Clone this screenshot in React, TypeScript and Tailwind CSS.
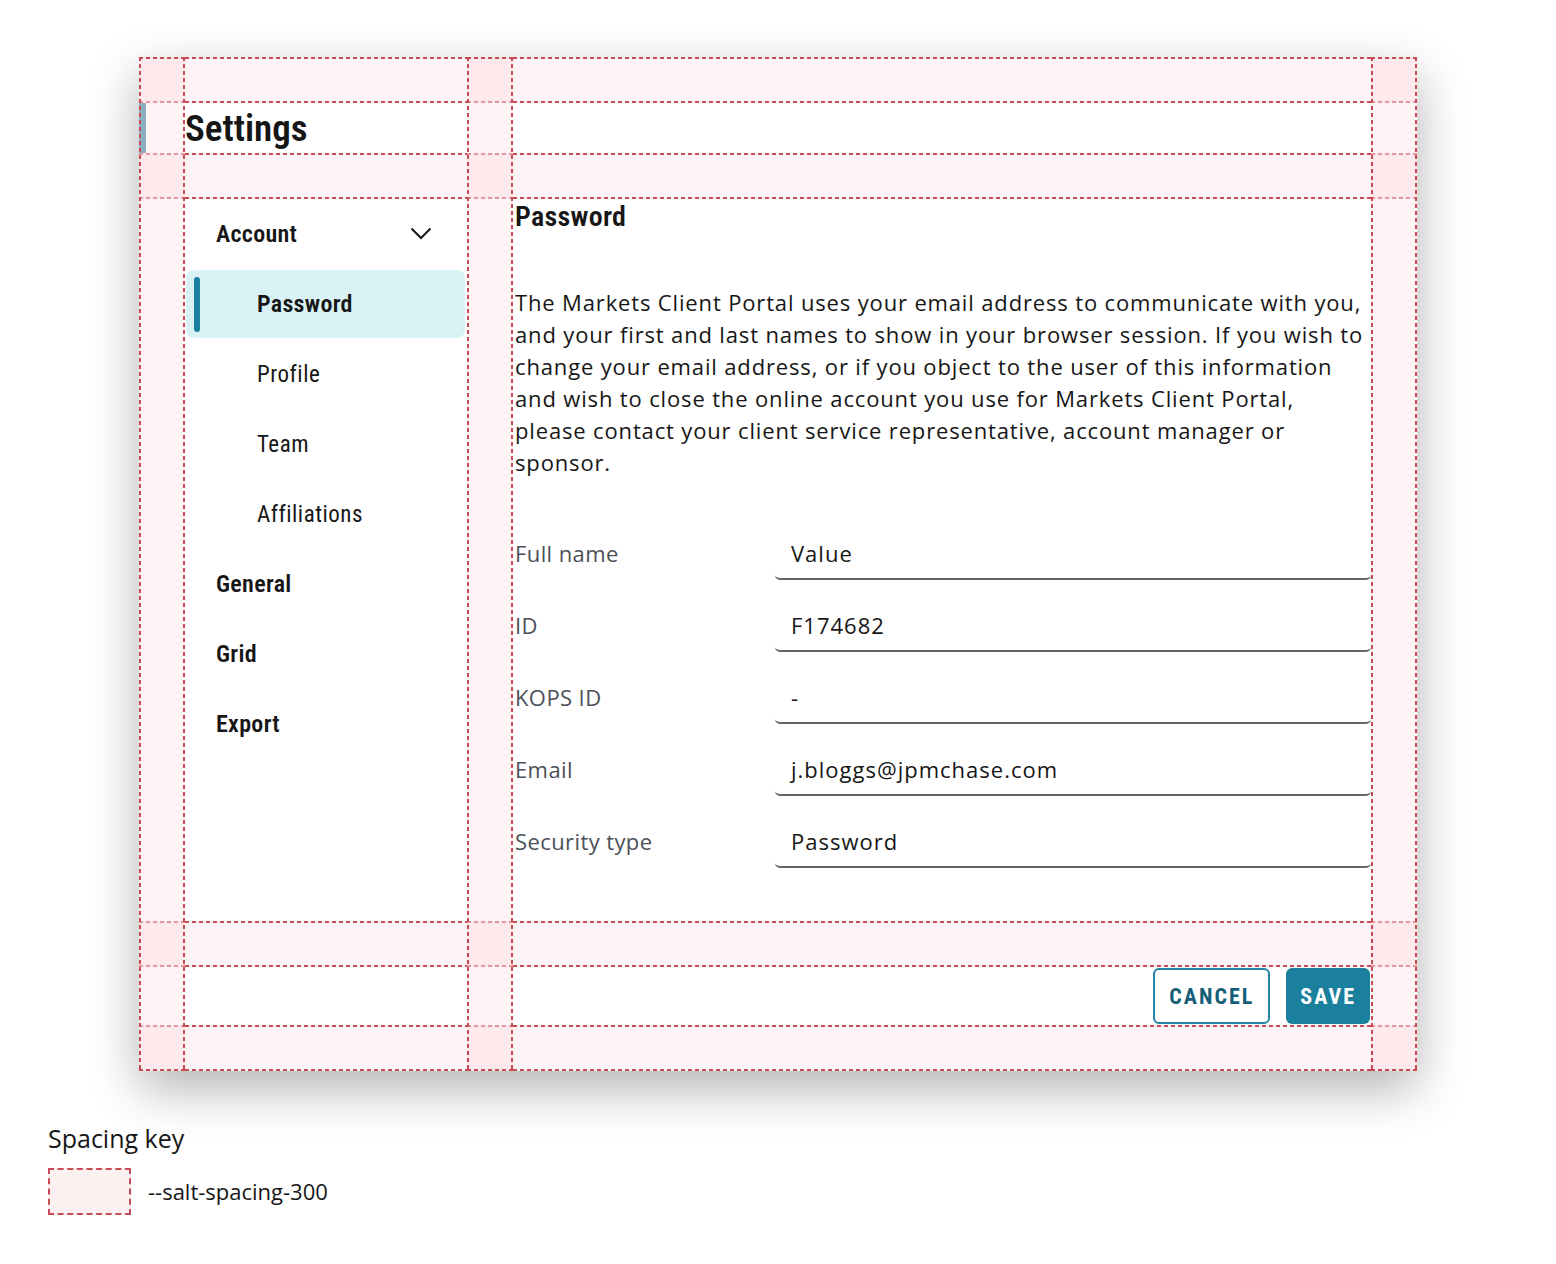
const narrow = "font-['Roboto_Condensed','DejaVu_Sans_Condensed',sans-serif]";
const openSans = "font-['Open_Sans','Liberation_Sans',sans-serif]";

const darkH = "h-[2px] bg-[repeating-linear-gradient(90deg,#c64b55_0_4px,transparent_4px_7px)]";
const lightH = "h-[2px] bg-[repeating-linear-gradient(90deg,#e29ca3_0_4px,transparent_4px_7px)]";
const darkV = "w-[2px] bg-[repeating-linear-gradient(180deg,#c64b55_0_4px,transparent_4px_7px)]";

function HLine({ outer }: { outer?: boolean }) {
  return (
    <div className="grid grid-cols-[46px_282px_46px_1fr_46px]">
      <div className={outer ? darkH : lightH} />
      <div className={darkH} />
      <div className={outer ? darkH : lightH} />
      <div className={darkH} />
      <div className={outer ? darkH : lightH} />
    </div>
  );
}

// spacing annotation drawn over the dialog
function SpacingOverlay() {
  return (
    <div className="pointer-events-none absolute inset-0 grid grid-cols-[46px_282px_46px_1fr_46px] grid-rows-[46px_50px_46px_1fr_46px_58px_46px]">
      <div className="col-span-full row-start-1 flex flex-col justify-between bg-[rgba(240,60,80,0.06)]">
        <HLine outer />
        <HLine />
      </div>
      <div className="col-span-full row-start-3 flex flex-col justify-between bg-[rgba(240,60,80,0.06)]">
        <HLine />
        <HLine />
      </div>
      <div className="col-span-full row-start-5 flex flex-col justify-between bg-[rgba(240,60,80,0.06)]">
        <HLine />
        <HLine />
      </div>
      <div className="col-span-full row-start-7 flex flex-col justify-between bg-[rgba(240,60,80,0.06)]">
        <HLine />
        <HLine outer />
      </div>
      <div className="col-start-1 row-span-full flex justify-between bg-[rgba(240,60,80,0.06)]">
        <div className={darkV} />
        <div className={darkV} />
      </div>
      <div className="col-start-3 row-span-full flex justify-between bg-[rgba(240,60,80,0.06)]">
        <div className={darkV} />
        <div className={darkV} />
      </div>
      <div className="col-start-5 row-span-full flex justify-between bg-[rgba(240,60,80,0.06)]">
        <div className={darkV} />
        <div className={darkV} />
      </div>
    </div>
  );
}

function Chevron() {
  return (
    <svg width="22" height="14" viewBox="0 0 22 14" fill="none">
      <polyline points="1.5,1.5 11,11 20.5,1.5" stroke="#161616" strokeWidth="2" />
    </svg>
  );
}

function NavItem({ label, sub }: { label: string; sub?: boolean }) {
  return (
    <div className="flex h-[70px] items-center">
      {sub ? (
        <span className={`${narrow} pl-[72px] pt-[3px] text-[23px] tracking-[0.5px] text-[#161616]`}>{label}</span>
      ) : (
        <span className={`${narrow} pl-[31px] text-[24px] font-semibold tracking-[0.3px] text-[#161616]`}>{label}</span>
      )}
    </div>
  );
}

const fields = [
  { label: "Full name", value: "Value" },
  { label: "ID", value: "F174682" },
  { label: "KOPS ID", value: "-" },
  { label: "Email", value: "j.bloggs@jpmchase.com" },
  { label: "Security type", value: "Password" },
];

function Field({ label, value }: { label: string; value: string }) {
  return (
    <div className="flex h-[50px] items-center">
      <span className={`${openSans} w-[262px] shrink-0 pb-[3px] pl-[2px] text-[22px] tracking-[0.4px] text-[#4d5059]`}>{label}</span>
      <div className="flex h-[50px] flex-1 items-center rounded-[5px] border-b-2 border-[#62666f] bg-white pb-[2px] pl-[16px]">
        <span className={`${openSans} text-[22px] tracking-[1px] text-[#161616]`}>{value}</span>
      </div>
    </div>
  );
}

export default function App() {
  return (
    <div className="min-h-screen bg-white pl-[48px] pt-[57px]">
      <div className="relative ml-[91px] w-[1278px] rounded-lg bg-white p-[46px] shadow-[0_18px_50px_rgba(0,0,0,0.3)]">
        <div className="-ml-[46px] flex h-[50px] items-center">
          <div className="h-full w-[7px] bg-[#86b4c7]" />
          <h1 className={`${narrow} ml-[39px] text-[37px] font-semibold leading-none text-[#161616]`}>Settings</h1>
        </div>

        <div className="mt-[46px] grid h-[722px] grid-cols-[282px_1fr] gap-x-[46px]">
          <nav className="flex flex-col">
            <div className="flex h-[70px] items-center justify-between pl-[31px] pr-[35px]">
              <span className={`${narrow} text-[24px] font-semibold tracking-[0.3px] text-[#161616]`}>Account</span>
              <Chevron />
            </div>
            <div className="h-[70px] py-px pl-px pr-[2px]">
              <div className="flex h-full items-center rounded-lg bg-[#d8f2f5]">
                <div className="ml-[8px] h-[55px] w-[6px] rounded-full bg-[#1b7f9e]" />
                <span className={`${narrow} ml-[57px] text-[24px] font-semibold tracking-[0.3px] text-[#161616]`}>
                  Password
                </span>
              </div>
            </div>
            <NavItem label="Profile" sub />
            <NavItem label="Team" sub />
            <NavItem label="Affiliations" sub />
            <NavItem label="General" />
            <NavItem label="Grid" />
            <NavItem label="Export" />
          </nav>

          <section className="flex flex-col">
            <h2 className={`${narrow} pl-[2px] text-[28px] font-semibold leading-[36px] tracking-[0.3px] text-[#161616]`}>
              Password
            </h2>
            <p className={`${openSans} mt-[51px] pl-[2px] text-[22px] leading-[32px] tracking-[0.85px] text-[#161616]`}>
              The Markets Client Portal uses your email address to communicate with you, and your first and last
              names to show in your browser session. If you wish to change your email address, or if you object to
              the user of this information and wish to close the online account you use for Markets Client Portal,
              please contact your client service representative, account manager or sponsor.
            </p>
            <div className="mt-[52px] flex flex-col gap-[22px]">
              {fields.map((f) => (
                <Field key={f.label} label={f.label} value={f.value} />
              ))}
            </div>
          </section>
        </div>

        <div className="mt-[46px] flex h-[58px] items-center justify-end gap-4">
          <button
            type="button"
            className={`${narrow} h-[56px] rounded-[6px] border-2 border-[#1f85a3] bg-white px-[14px] text-[22px] font-bold uppercase tracking-[2px] text-[#145f77]`}
          >
            Cancel
          </button>
          <button
            type="button"
            className={`${narrow} mr-px h-[56px] rounded-[6px] bg-[#1b7f9e] px-[14px] text-[22px] font-bold uppercase tracking-[2px] text-white`}
          >
            Save
          </button>
        </div>

        <SpacingOverlay />
      </div>

      <div className="mt-[50px]">
        <p className={`${openSans} text-[25px] leading-[34px] text-[#161616]`}>Spacing key</p>
        <div className="mt-[13px] flex items-center gap-[17px]">
          <div className="h-[47px] w-[83px] border-2 border-dashed border-[#c64b55] bg-[#fdf0f1]" />
          <span className={`${openSans} text-[22px] text-[#161616]`}>--salt-spacing-300</span>
        </div>
      </div>
    </div>
  );
}
